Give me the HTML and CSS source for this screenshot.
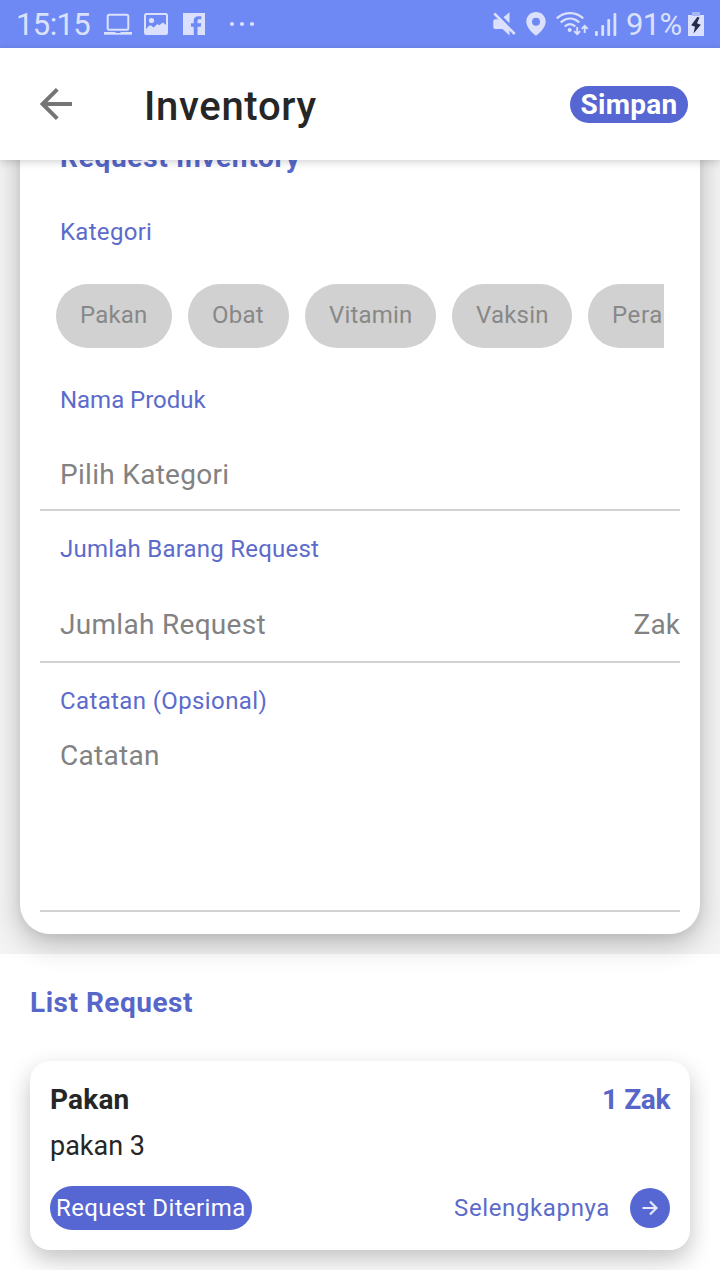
FILE: index.html
```html
<!DOCTYPE html>
<html lang="id">
<head>
<meta charset="utf-8">
<title>Inventory</title>
<link rel="stylesheet" href="styles.css">
</head>
<body>
<div class="status">
  <span class="clock">15:15</span>
  <svg class="s-laptop" width="28" height="22" viewBox="0 0 28 22"><rect x="3.700" y="1.700" width="20.600" height="15" rx="1.500" fill="none" stroke="currentColor" stroke-width="2"/><path d="M0 19h28v2.700H0z" fill="currentColor"/><path d="M11.500 19h5v1h-5z" fill="#6f89f4"/></svg>
  <svg class="s-image" width="24" height="22" viewBox="0 0 24 22"><rect x="1" y="1" width="22" height="20" rx="1.500" fill="none" stroke="currentColor" stroke-width="2"/><circle cx="7.500" cy="7.500" r="2.600" fill="currentColor"/><path d="M2 16l3-3.200 2-.4 2.500 2.200 4-3.500 1.500 1.200 4-2.800 3 2.500V20H2z" fill="currentColor"/></svg>
  <svg class="s-fb" width="22" height="22" viewBox="0 0 22 22"><path d="M0 0h22v22h-7.500v-8.300h3.200l.6-3.400h-3.800V8.200c0-1.300.6-1.900 1.900-1.900h1.900V3.200h-2.800c-3.300 0-4.800 1.900-4.800 4.700v2.400H8v3.400h2.700V22H0z" fill="currentColor"/></svg>
  <svg class="s-more" width="26" height="22" viewBox="0 0 26 22" fill="currentColor"><circle cx="3" cy="11" r="2.100"/><circle cx="13" cy="11" r="2.100"/><circle cx="23" cy="11" r="2.100"/></svg>
  <div class="status-right">
    <svg class="s-mute" width="24" height="24" viewBox="0 0 24 24"><path d="M0.300 9Q.3 7.300 2 7.300H6L7.500 6.500 16.500 15.500V23.500L9.500 17H2Q.3 17 .3 15zM10.500 5.300L16.500.300V11.300z" fill="currentColor"/><path d="M1.300 1.500L21.700 22" stroke="currentColor" stroke-width="2.500"/></svg>
    <svg class="s-pin" width="20" height="24" viewBox="0 0 20 24"><path d="M10 0C4.500 0 .3 4.200.3 9.500.3 15.500 6 20.500 10 23.800c4-3.300 9.700-8.300 9.700-14.300C19.700 4.200 15.500 0 10 0zm0 5.700a4 4 0 1 1 0 8 4 4 0 0 1 0-8z" fill="currentColor" fill-rule="evenodd"/></svg>
    <svg class="s-wifi" width="33" height="24" viewBox="0 0 33 24"><g fill="none" stroke="currentColor" stroke-width="2.300"><path d="M.8 6.300C8.500-.6 19.500-.6 27.200 6.300"/><path d="M4.700 10.500C10.500 5.300 17.500 5.300 23.300 10.500"/><path d="M8.700 14.500C12 11.500 16 11.500 19.300 14.500"/></g><circle cx="13.700" cy="18" r="2" fill="currentColor"/><path d="M21.200 15v7M18.200 19.200l3 3 3-3M28.700 21v-7M25.700 16.800l3-3 3 3" fill="none" stroke="currentColor" stroke-width="1.900"/></svg>
    <svg class="s-signal" width="22" height="24" viewBox="0 0 22 24" fill="currentColor"><rect y="19" width="2.800" height="5" rx="1"/><rect x="6.300" y="13" width="2.800" height="11" rx="1"/><rect x="12.300" y="7" width="2.800" height="17" rx="1"/><rect x="18.500" y="1" width="2.800" height="23" rx="1"/></svg>
    <span class="percent">91%</span>
    <svg class="s-batt" width="16" height="24" viewBox="0 0 16 24"><path d="M4 0h8v4H4z" fill="#a7b6f8"/><path d="M0 3h16v21H0z" fill="currentColor"/><path d="M4 3h8v1H4z" fill="#a7b6f8"/><path d="M9.300 5L3.200 13.200l3.800 1.500L5.500 21.500l7.300-8.800-3.800-1.500 2.500-5.700z" fill="#252b4b"/></svg>
  </div>
</div>
<header class="appbar">
  <svg class="back" width="32" height="32" viewBox="0 0 32 32" fill="none" stroke="#757575" stroke-width="3.900"><path d="M32 16H3M17.300 1.300L2.600 16l14.700 14.700"/></svg>
  <h1 class="title">Inventory</h1>
  <button class="save"><span>Simpan</span></button>
</header>
<main class="content">
  <section class="form-area">
    <div class="card form">
      <h2 class="heading form-heading">Request Inventory</h2>
      <div class="label l-kategori">Kategori</div>
      <div class="chips">
        <span class="chip c1">Pakan</span><span class="chip c2">Obat</span><span class="chip c3">Vitamin</span><span class="chip c4">Vaksin</span><span class="chip c5">Peralatan</span>
      </div>
      <div class="label l-nama">Nama Produk</div>
      <div class="field f-produk"><span class="v-produk">Pilih Kategori</span></div>
      <div class="label l-jumlah">Jumlah Barang Request</div>
      <div class="field f-jumlah"><span class="v-jumlah">Jumlah Request</span><span class="v-zak">Zak</span></div>
      <div class="label l-catatan">Catatan (Opsional)</div>
      <div class="field f-catatan"><span class="v-catatan">Catatan</span></div>
    </div>
  </section>
  <section class="list-area">
    <h2 class="heading list-heading">List Request</h2>
    <div class="list">
      <article class="card item">
        <div class="row"><strong class="name">Pakan</strong><strong class="qty">1 Zak</strong></div>
        <div class="product">pakan 3</div>
        <div class="row actions">
          <span class="pill"><span>Request Diterima</span></span>
          <a class="more"><span class="more-text">Selengkapnya</span>
            <span class="go"><svg width="16" height="16" viewBox="0 0 16 16" fill="none" stroke="#e6e9fb" stroke-width="2.200"><path d="M.5 8h13.500M8 1.500L14.500 8 8 14.500"/></svg></span></a>
        </div>
      </article>
    </div>
  </section>
</main>
</body>
</html>
```
FILE: styles.css
```css
* { box-sizing: border-box; margin: 0; padding: 0; }
body {
  width: 720px; height: 1280px; overflow: hidden;
  display: flex; flex-direction: column;
  background: #fff; color: #262626;
  font-family: Roboto, "Liberation Sans", sans-serif;
  font-weight: 400;
  white-space: nowrap;
}
svg { display: block; flex: none; }

.status {
  flex: none; height: 48px; padding: 0 16px 0 16px;
  display: flex; align-items: center;
  background: #6f89f4; color: #dbe1fd;
}
.clock, .percent { padding-top: 2px; font-size: 31px; line-height: 48px; font-weight: 400; }
.clock { width: 88px; letter-spacing: -0.6px; }
.s-image { margin-left: 12px; }
.s-fb { margin-left: 15px; }
.s-more { margin-left: 24px; }
.status-right { margin-left: auto; display: flex; align-items: center; }
.s-pin { margin-left: 9px; }
.s-wifi { margin-left: 10px; }
.s-signal { margin-left: 6px; }
.percent { width: 61px; margin-left: 9px; margin-right: 1px; letter-spacing: -0.7px; }

.appbar {
  flex: none; height: 112px; padding: 0 32px 0 40px;
  display: flex; align-items: center;
  background: #fff; position: relative; z-index: 2;
  box-shadow: 0 2px 8px rgba(0, 0, 0, 0.18);
}
.title { margin-left: 72px; padding-top: 6px; font-size: 40px; font-weight: 500; line-height: 48px; letter-spacing: 0.7px; }
.save {
  margin-left: auto; width: 118px; height: 37px; padding: 1px 0 0; border: 0; border-radius: 19px;
  background: #5666d3; color: #fff;
  font: 700 28px/36px Roboto, sans-serif; letter-spacing: 0.3px;
}

.content { flex: none; height: 1110px; overflow: hidden; }
.form-area { display: flow-root; height: 794px; padding: 0 20px; background: #f3f3f3; }
.card { background: #fff; }
.form {
  position: relative; margin-top: -63px; height: 837px; padding: 40px 20px 0;
  border-radius: 30px;
  box-shadow: 0 10px 28px rgba(0, 0, 0, 0.24), 0 2px 12px rgba(0, 0, 0, 0.06);
}
.heading { padding-top: 1px; margin-bottom: -1px; font-size: 28px; line-height: 40px; font-weight: 700; color: #5666c9; }
.form-heading { margin-left: 20px; letter-spacing: 0.7px; }
.label { margin-left: 20px; font-size: 24px; line-height: 32px; color: #5c6bcb; letter-spacing: 0.3px; }
.l-kategori { margin-top: 39px; }
.chips { display: flex; gap: 16px; width: 608px; margin: 36px 0 0 16px; overflow: hidden; }
.chip {
  flex: none; height: 64px; padding: 0 0 1px 24px; border-radius: 32px;
  background: #d1d1d1; color: #888;
  font-size: 24px; line-height: 63px; letter-spacing: 0.2px;
}
.c1 { width: 116px; }
.c2 { width: 101px; }
.c3 { width: 131px; }
.c4 { width: 120px; }
.c5 { width: 150px; letter-spacing: 0.6px; }
.l-nama { margin-top: 36px; letter-spacing: -0.03px; }
.field {
  display: flex; justify-content: space-between; padding-left: 20px;
  border-bottom: 2px solid #d1d1d1;
  font-size: 28px; line-height: 40px; color: #828282; letter-spacing: 0.3px;
}
.f-produk { height: 95px; padding-top: 39px; }
.l-jumlah, .l-catatan { margin-top: 22px; }
.l-jumlah { letter-spacing: 0.23px; }
.l-catatan { letter-spacing: 0.38px; }
.f-jumlah { height: 98px; padding-top: 40px; }
.v-zak { letter-spacing: 0.1px; }
.f-catatan { height: 195px; padding-top: 19px; }

.list-area { padding: 28px 10px 0; }
.list-heading { margin-left: 20px; letter-spacing: 0.5px; }
.list { overflow: hidden; height: 248px; padding: 39px 20px 0; }
.item {
  height: 189px; padding: 19px 20px 19px; border-radius: 20px;
  box-shadow: 0 10px 24px rgba(0, 0, 0, 0.24);
}
.row { display: flex; justify-content: space-between; align-items: center; }
.name, .qty { font-size: 28px; line-height: 40px; font-weight: 700; }
.name { letter-spacing: 0.2px; }
.qty { color: #5666c9; letter-spacing: -0.4px; }
.product { margin-top: 6px; font-size: 27px; line-height: 40px; letter-spacing: 0; }
.actions { margin-top: 20px; height: 44px; }
.pill {
  width: 202px; height: 44px; padding-left: 6px; border-radius: 22px;
  background: #5666d3; color: #fff; font-size: 24px; line-height: 44px; letter-spacing: 0.38px;
}
.more { display: flex; align-items: center; gap: 20px; font-size: 24px; color: #5c6bcb; letter-spacing: 0.62px; }
.go {
  width: 40px; height: 40px; border-radius: 50%; background: #5666d3;
  display: flex; align-items: center; justify-content: center;
}
```
